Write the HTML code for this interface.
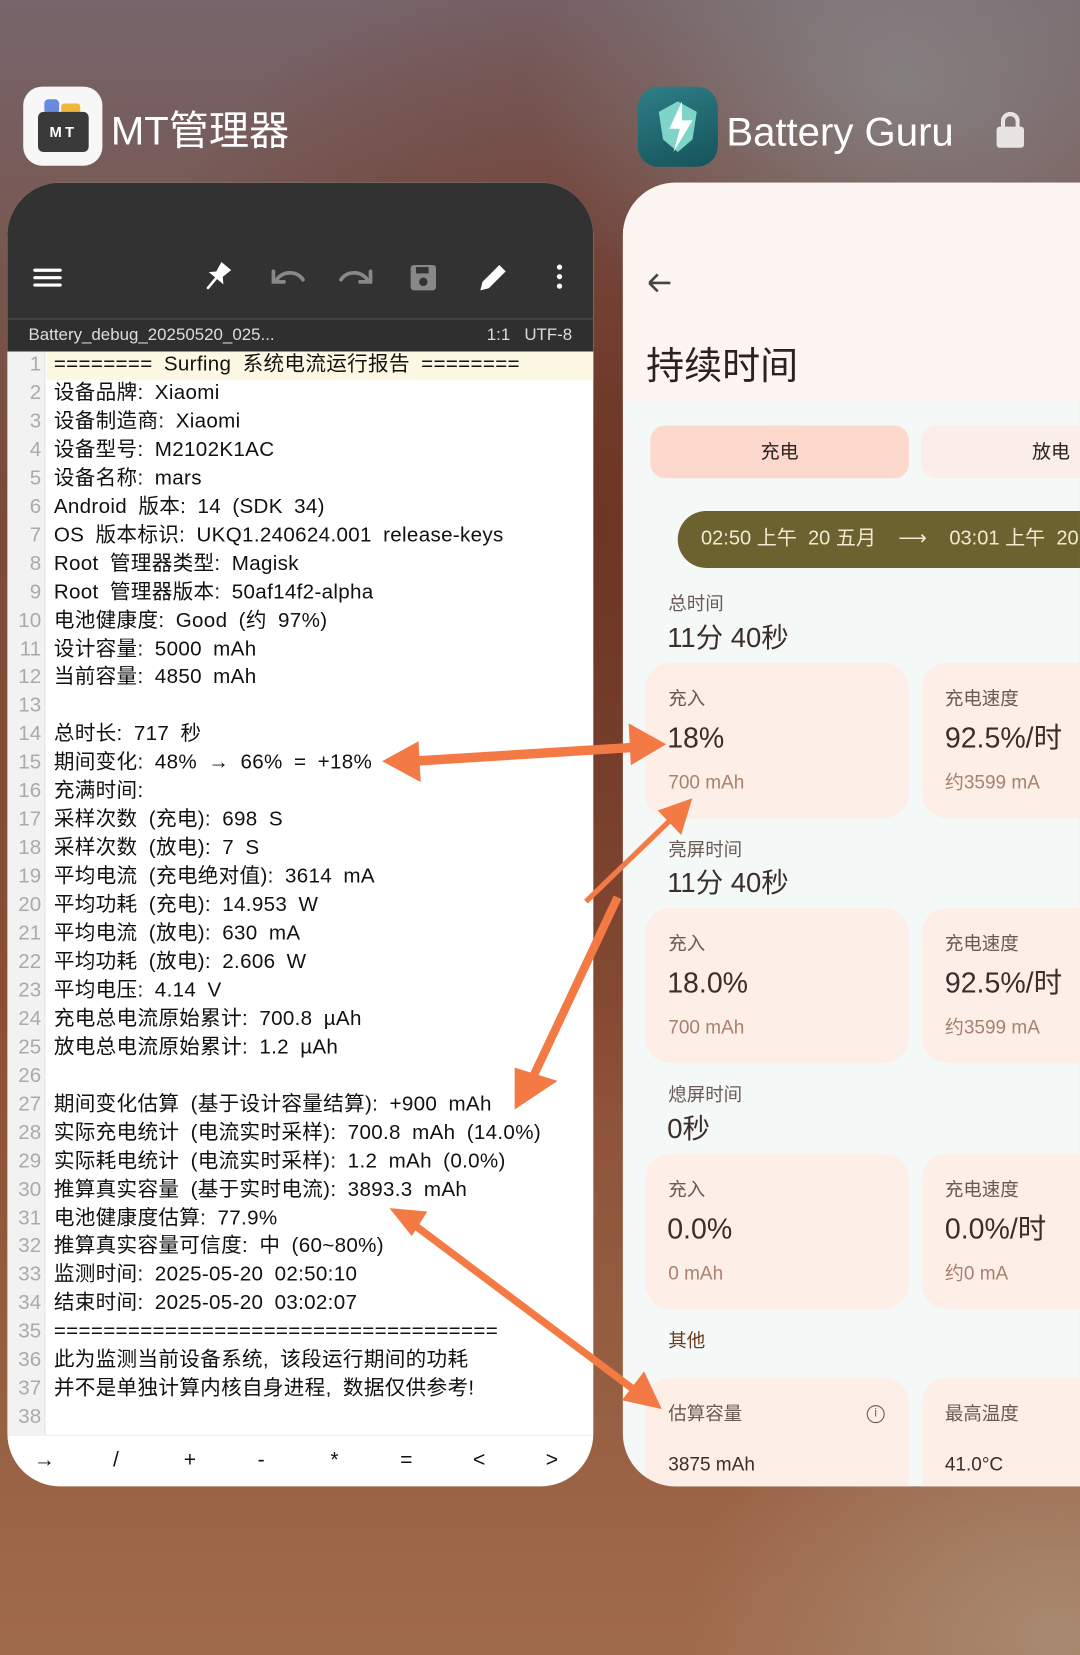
<!DOCTYPE html>
<html><head><meta charset="utf-8"><style>
*{margin:0;padding:0;box-sizing:border-box}
html,body{width:1080px;height:1655px;overflow:hidden}
body{background:#8a5a42;font-family:"Liberation Sans","Noto Sans CJK SC",sans-serif}
#w{position:absolute;left:0;top:0;width:1023px;height:1568px;transform:scale(1.0557);transform-origin:0 0;overflow:hidden;
background:
radial-gradient(ellipse 500px 400px at 850px 80px,rgba(140,140,140,.7),transparent 70%),
radial-gradient(ellipse 600px 700px at 560px 500px,#6e3424,transparent 80%),
radial-gradient(ellipse 500px 400px at 1000px 1550px,#a88a70,transparent 70%),
linear-gradient(180deg,#76656b 0%,#7a4a38 30%,#8a4e34 60%,#a06a4c 100%);}
.abs{position:absolute}
.t{color:#fff;font-size:38px;white-space:nowrap;line-height:1}
#L{left:7px;top:173px;width:555px;height:1235px;border-radius:50px;overflow:hidden;background:#fff}
#hd{height:129px;background:#323232;position:relative}
#fb{height:31px;background:#2f2f2f;border-top:1px solid #444;color:#ddd;font-size:16px;line-height:30px;padding-left:20px;position:relative}
.ln{position:absolute;left:0;width:555px;height:27px;font-size:19.5px;line-height:27px;color:#111;white-space:pre;word-spacing:5px;letter-spacing:0.3px}
.ln b{display:inline-block;width:32px;text-align:right;font-weight:normal;color:#aaa;margin-right:12px;letter-spacing:0;word-spacing:0}
#gut{position:absolute;left:0;top:160px;width:36px;height:1026px;background:#f2f2f2;border-right:1px solid #e4e4e4}
#bb{position:absolute;left:0;top:1186px;width:555px;height:49px;border-top:1px solid #eee;font-size:20px;color:#111}
#bb span{position:absolute;top:12px}
#R{left:590px;top:173px;width:500px;height:1235px;border-radius:50px 0 0 50px;overflow:hidden;background:#f4f8f6}
#R .c{position:absolute;background:#fdeee8;border-radius:24px;width:250px}
.lb{position:absolute;font-size:17.5px;color:#6a5a55;white-space:nowrap;line-height:1}
.vl{position:absolute;font-size:27px;color:#3a2e2a;white-space:nowrap;line-height:1}
.sm{position:absolute;font-size:18px;color:#a88070;white-space:nowrap;line-height:1}
</style></head><body><div id="w">
<div class="abs" style="left:22px;top:82px;width:75px;height:75px;border-radius:18px;background:#f7f7f7">
 <div class="abs" style="left:20px;top:12px;width:14px;height:14px;background:#6a8ae0;border-radius:4px"></div>
 <div class="abs" style="left:36px;top:16px;width:18px;height:14px;background:#f0b83a;border-radius:3px"></div>
 <div class="abs" style="left:14px;top:24px;width:48px;height:38px;background:#3a3a3a;border-radius:5px;color:#fff;font-size:14px;font-weight:bold;text-align:center;line-height:38px;letter-spacing:3px">MT</div>
</div>
<div class="abs t" style="left:105px;top:106px">MT管理器</div>
<div class="abs" style="left:604px;top:82px;width:76px;height:76px;border-radius:20px;background:linear-gradient(160deg,#2f7f86,#15525a)">
 <svg width="76" height="76"><path d="M20 24 L38 14 L56 24 L52 50 L38 62 L24 50 Z" fill="#7fd4c8"/><path d="M42 14 L30 40 L40 40 L34 62 L52 32 L42 32 Z" fill="#fff"/></svg>
</div>
<div class="abs t" style="left:688px;top:107px">Battery Guru</div>
<div class="abs" style="left:944px;top:120px;width:26px;height:20px;background:#e8e4e2;border-radius:3px"></div>
<div class="abs" style="left:948px;top:106px;width:18px;height:20px;border:4px solid #e8e4e2;border-bottom:none;border-radius:9px 9px 0 0"></div>

<div id="L" class="abs">
 <div id="hd">
  <svg class="abs" style="left:0;top:0" width="555" height="129" fill="none" stroke-linecap="round">
   <path d="M26 83h24M26 90h24M26 97h24" stroke="#fff" stroke-width="3"/>
   <g transform="rotate(40 199 89)"><path d="M193 76 h12 l-2 10 l5 5 h-18 l5 -5 z" fill="#fff"/><path d="M199 91 v12" stroke="#fff" stroke-width="2.5"/></g>
   <path d="M254 94 c4-10 20-12 26 -2 M252 84 v10 h10" stroke="#888" stroke-width="3.5"/>
   <path d="M342 94 c-4-10 -20-12 -26 -2 M344 84 v10 h-10" stroke="#888" stroke-width="3.5"/>
   <rect x="382" y="78" width="24" height="24" rx="3" fill="#888"/><circle cx="394" cy="94" r="4" fill="#323232"/><rect x="387" y="80" width="12" height="6" fill="#323232"/>
   <path d="M448 102 l2-8 l16-16 l6 6 l-16 16 z" fill="#fff"/>
   <circle cx="523" cy="80" r="2.5" fill="#fff"/><circle cx="523" cy="89" r="2.5" fill="#fff"/><circle cx="523" cy="98" r="2.5" fill="#fff"/>
  </svg>
 </div>
 <div id="fb">Battery_debug_20250520_025...<span class="abs" style="right:20px;top:0">1:1&nbsp;&nbsp;&nbsp;UTF-8</span></div>
 <div id="gut"></div>
 <div class="abs" style="left:37px;top:160px;width:518px;height:27px;background:#fdf8e4"></div>
 <div id="lines"></div>
 <div id="bb"><span style="left:25px">→</span><span style="left:100px">/</span><span style="left:167px">+</span><span style="left:237px">-</span><span style="left:306px">*</span><span style="left:372px">=</span><span style="left:441px">&lt;</span><span style="left:510px">&gt;</span></div>
</div>

<div id="R" class="abs">
 <div class="abs" style="left:0;top:0;width:500px;height:207px;background:#fdf5f2"></div>
 <svg class="abs" style="left:20px;top:82px" width="30" height="30" fill="none" stroke="#444" stroke-width="2.5"><path d="M5 13h20M5 13l8-8M5 13l8 8"/></svg>
 <div class="abs" style="left:22px;top:145px;font-size:36px;color:#2a2220">持续时间</div>
 <div class="abs" style="left:26px;top:230px;width:245px;height:50px;border-radius:14px;background:#fdd9cd;text-align:center;line-height:50px;font-size:18px;color:#2a2220">充电</div>
 <div class="abs" style="left:283px;top:230px;width:245px;height:50px;border-radius:14px;background:#fbeee8;text-align:center;line-height:50px;font-size:18px;color:#2a2220">放电</div>
 <div class="abs" style="left:52px;top:311px;width:500px;height:54px;border-radius:27px;background:#6b6230;color:#f2ead0;font-size:19px;line-height:54px;padding-left:22px;white-space:pre">02:50 上午  20 五月    ⟶    03:01 上午  20 五月</div>
 <div class="lb" style="left:43px;top:391px">总时间</div><div class="vl" style="left:42px;top:418px;font-size:26px">11分 40秒</div>
 <div class="c" style="left:21px;top:455px;height:147px"></div><div class="c" style="left:283px;top:455px;height:147px"></div>
 <div class="lb" style="left:43px;top:481px">充入</div><div class="vl" style="left:42px;top:513px">18%</div><div class="sm" style="left:43px;top:559px">700 mAh</div>
 <div class="lb" style="left:305px;top:481px">充电速度</div><div class="vl" style="left:305px;top:513px">92.5%/时</div><div class="sm" style="left:305px;top:559px">约3599 mA</div>
 <div class="lb" style="left:43px;top:624px">亮屏时间</div><div class="vl" style="left:42px;top:650px;font-size:26px">11分 40秒</div>
 <div class="c" style="left:21px;top:687px;height:147px"></div><div class="c" style="left:283px;top:687px;height:147px"></div>
 <div class="lb" style="left:43px;top:713px">充入</div><div class="vl" style="left:42px;top:745px">18.0%</div><div class="sm" style="left:43px;top:791px">700 mAh</div>
 <div class="lb" style="left:305px;top:713px">充电速度</div><div class="vl" style="left:305px;top:745px">92.5%/时</div><div class="sm" style="left:305px;top:791px">约3599 mA</div>
 <div class="lb" style="left:43px;top:856px">熄屏时间</div><div class="vl" style="left:42px;top:883px;font-size:26px">0秒</div>
 <div class="c" style="left:21px;top:920px;height:147px"></div><div class="c" style="left:283px;top:920px;height:147px"></div>
 <div class="lb" style="left:43px;top:946px">充入</div><div class="vl" style="left:42px;top:978px">0.0%</div><div class="sm" style="left:43px;top:1024px">0 mAh</div>
 <div class="lb" style="left:305px;top:946px">充电速度</div><div class="vl" style="left:305px;top:978px">0.0%/时</div><div class="sm" style="left:305px;top:1024px">约0 mA</div>
 <div class="lb" style="left:43px;top:1089px;color:#6a3a20">其他</div>
 <div class="c" style="left:21px;top:1132px;height:150px"></div><div class="c" style="left:283px;top:1132px;height:150px"></div>
 <div class="lb" style="left:43px;top:1158px">估算容量</div>
 <div class="abs" style="left:231px;top:1158px;width:17px;height:17px;border:1.5px solid #6a5a55;border-radius:50%;font-size:11px;text-align:center;line-height:14px;color:#6a5a55">i</div>
 <div class="abs" style="left:43px;top:1205px;font-size:18px;color:#3a2e2a;line-height:1">3875 mAh</div>
 <div class="lb" style="left:305px;top:1158px">最高温度</div>
 <div class="abs" style="left:305px;top:1205px;font-size:18px;color:#3a2e2a;line-height:1">41.0°C</div>
</div>

<svg class="abs" style="left:0;top:0" width="1023" height="1568" fill="#f47a45" stroke="#f47a45">
 <path d="M392 721 L600 708" stroke-width="9"/>
 <polygon points="363,721 396,703 398,740"/>
 <polygon points="630,705 596,686 598,724"/>
 <path d="M555 854 L640 772" stroke-width="5"/>
 <polygon points="655,757 624,768 645,790"/>
 <path d="M585 850 L505 1020" stroke-width="8"/>
 <polygon points="488,1050 488,1012 527,1024"/>
 <path d="M392 1160 L600 1316" stroke-width="7"/>
 <polygon points="370,1145 404,1148 390,1170"/>
 <polygon points="626,1334 590,1326 610,1300"/>
</svg>
</div>
<script>
var L=["======== Surfing 系统电流运行报告 ========","设备品牌: Xiaomi","设备制造商: Xiaomi","设备型号: M2102K1AC","设备名称: mars","Android 版本: 14 (SDK 34)","OS 版本标识: UKQ1.240624.001 release-keys","Root 管理器类型: Magisk","Root 管理器版本: 50af14f2-alpha","电池健康度: Good (约 97%)","设计容量: 5000 mAh","当前容量: 4850 mAh","","总时长: 717 秒","期间变化: 48% → 66% = +18%","充满时间:","采样次数 (充电): 698 S","采样次数 (放电): 7 S","平均电流 (充电绝对值): 3614 mA","平均功耗 (充电): 14.953 W","平均电流 (放电): 630 mA","平均功耗 (放电): 2.606 W","平均电压: 4.14 V","充电总电流原始累计: 700.8 µAh","放电总电流原始累计: 1.2 µAh","","期间变化估算 (基于设计容量结算): +900 mAh","实际充电统计 (电流实时采样): 700.8 mAh (14.0%)","实际耗电统计 (电流实时采样): 1.2 mAh (0.0%)","推算真实容量 (基于实时电流): 3893.3 mAh","电池健康度估算: 77.9%","推算真实容量可信度: 中 (60~80%)","监测时间: 2025-05-20 02:50:10","结束时间: 2025-05-20 03:02:07","====================================","此为监测当前设备系统, 该段运行期间的功耗","并不是单独计算内核自身进程, 数据仅供参考!",""];
var h="";for(var i=0;i<L.length;i++){h+='<div class="ln" style="top:'+(159+i*26.95)+'px"><b>'+(i+1)+'</b>'+L[i].replace(/</g,"&lt;")+'</div>';}
document.getElementById("lines").innerHTML=h;
</script>
</body></html>
